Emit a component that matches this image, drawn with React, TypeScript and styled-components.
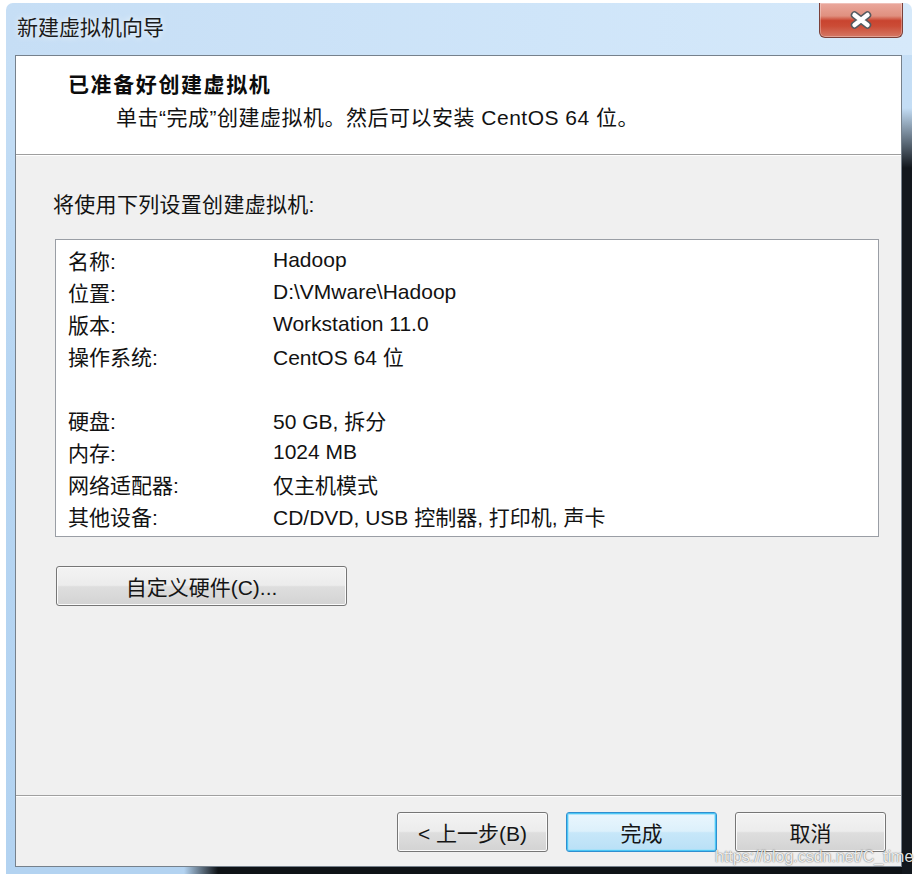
import React from "react";
import styled, { createGlobalStyle } from "styled-components";

const GlobalStyle = createGlobalStyle`
  html, body {
    margin: 0;
    padding: 0;
    background: #ffffff;
  }
  body {
    width: 920px;
    height: 876px;
    overflow: hidden;
    font-family: "Liberation Sans", "Noto Sans CJK SC", sans-serif;
    color: #121212;
  }
`;

const Stage = styled.div`
  position: relative;
  width: 920px;
  height: 876px;
  padding: 3px 8px 0 6px;
  box-sizing: border-box;
`;

const Window = styled.div`
  height: 871px;
  box-sizing: border-box;
  display: flex;
  flex-direction: column;
  padding: 0 10px 7px 9px;
  border-radius: 7px 7px 0 0;
  background:
    linear-gradient(to bottom, rgba(16, 20, 26, 0) 0, rgba(16, 20, 26, 0) 105px, #12171d 165px) right top / 10px 100% no-repeat,
    linear-gradient(to right, rgba(14, 18, 22, 0) 0, rgba(14, 18, 22, 0) 178px, #0e1216 212px) left bottom / 100% 7px no-repeat,
    linear-gradient(to right, #c6def5 0, #cfe5f9 60%, #d6e9fa 100%) top / 100% 52px no-repeat,
    linear-gradient(to bottom, #c8e0f6 0, #b6d5f2 45%, #b3d3f1 100%);
`;

const TitleBar = styled.div`
  height: 52px;
  display: flex;
  justify-content: space-between;
  align-items: flex-start;
  margin-right: -1px;
`;

const TitleText = styled.div`
  padding: 12px 0 0 2px;
  font-size: 21px;
  line-height: 26px;
  color: #1b1b1b;
  text-shadow: 0 0 6px rgba(255, 255, 255, 0.9);
`;

const CloseButton = styled.button`
  width: 84px;
  height: 35px;
  padding: 0;
  display: flex;
  align-items: center;
  justify-content: center;
  border: 1px solid #7b4039;
  border-top: none;
  border-radius: 0 0 6px 6px;
  background: linear-gradient(
    to bottom,
    #eaa89d 0%,
    #e0907f 38%,
    #c9442f 52%,
    #cb4c36 68%,
    #d57865 100%
  );
  box-shadow: inset 0 0 0 1px rgba(255, 255, 255, 0.3);
`;

const Client = styled.div`
  flex: 1;
  display: flex;
  flex-direction: column;
  border: 1px solid #76818c;
  background: #f0f0f0;
`;

const Header = styled.div`
  height: 99px;
  box-sizing: border-box;
  padding: 16px 0 0 52px;
  background: #ffffff;
  border-bottom: 1px solid #9e9e9e;
`;

const HeaderTitle = styled.div`
  font-size: 21px;
  line-height: 26px;
  font-weight: 700;
  letter-spacing: 1.6px;
  color: #0c0c0c;
`;

const HeaderSub = styled.div`
  margin: 7px 0 0 48px;
  font-size: 21px;
  line-height: 26px;
  letter-spacing: 0.5px;
`;

const Body = styled.div`
  flex: 1;
  display: flex;
  flex-direction: column;
  align-items: flex-start;
  padding: 36px 22px 0 37px;
  border-top: 1px solid #ffffff;
`;

const Caption = styled.div`
  font-size: 21px;
  line-height: 26px;
  letter-spacing: 0.3px;
`;

const SummaryList = styled.div`
  align-self: stretch;
  margin: 21px 0 0 2px;
  padding: 4px 0;
  background: #ffffff;
  border: 1px solid #9a9ea5;
`;

const Row = styled.div`
  display: grid;
  grid-template-columns: 205px 1fr;
  height: 32px;
  align-items: center;
  padding-left: 12px;
  font-size: 21px;
`;

const Button = styled.button<{ $primary?: boolean; $width: number }>`
  width: ${(p) => p.$width}px;
  height: 40px;
  padding: 0;
  border-radius: 3px;
  font-family: "Liberation Sans", "Noto Sans CJK SC", sans-serif;
  font-size: 21px;
  color: #151515;
  border: 1px solid ${(p) => (p.$primary ? "#2f8fd0" : "#767676")};
  box-shadow: ${(p) =>
    p.$primary
      ? "inset 0 0 0 1px #4cc6f4, inset 0 0 0 2px rgba(160,225,250,0.8)"
      : "inset 0 0 0 1px #fbfbfb"};
  background: ${(p) =>
    p.$primary
      ? "linear-gradient(to bottom, #eaf6fd 0%, #dcf0fb 48%, #c7e7f9 52%, #b9e0f6 100%)"
      : "linear-gradient(to bottom, #f3f3f3 0%, #ececec 48%, #dedede 52%, #d3d3d3 100%)"};
`;

const CustomizeButton = styled(Button)`
  margin: 29px 0 0 3px;
`;

const Footer = styled.div`
  display: flex;
  justify-content: flex-end;
  gap: 18px;
  padding: 16px 15px 14px;
  border-top: 1px solid #a0a0a0;
  box-shadow: inset 0 1px 0 #ffffff;
`;

const Watermark = styled.div`
  position: absolute;
  left: 715px;
  top: 848px;
  font-family: "Liberation Sans", sans-serif;
  font-size: 16px;
  line-height: 18px;
  color: rgba(255, 255, 255, 0.9);
  text-shadow: 0 0 1px rgba(0, 0, 0, 0.55), 0 0 2px rgba(0, 0, 0, 0.3);
  white-space: nowrap;
`;

const CloseGlyph: React.FC = () => (
  <svg width="26" height="18" viewBox="0 0 26 18">
    <path
      d="M6.5 4 L19.5 14 M19.5 4 L6.5 14"
      stroke="#555a60"
      strokeWidth="7.5"
      strokeLinecap="round"
      fill="none"
    />
    <path
      d="M6.5 4 L19.5 14 M19.5 4 L6.5 14"
      stroke="#ffffff"
      strokeWidth="4.5"
      strokeLinecap="round"
      fill="none"
    />
  </svg>
);

const settings: [string, string][] = [
  ["名称:", "Hadoop"],
  ["位置:", "D:\\VMware\\Hadoop"],
  ["版本:", "Workstation 11.0"],
  ["操作系统:", "CentOS 64 位"],
  ["", ""],
  ["硬盘:", "50 GB, 拆分"],
  ["内存:", "1024 MB"],
  ["网络适配器:", "仅主机模式"],
  ["其他设备:", "CD/DVD, USB 控制器, 打印机, 声卡"],
];

const App: React.FC = () => {
  return (
    <Stage>
      <GlobalStyle />
      <Window>
        <TitleBar>
          <TitleText>新建虚拟机向导</TitleText>
          <CloseButton aria-label="关闭">
            <CloseGlyph />
          </CloseButton>
        </TitleBar>

        <Client>
          <Header>
            <HeaderTitle>已准备好创建虚拟机</HeaderTitle>
            <HeaderSub>单击“完成”创建虚拟机。然后可以安装 CentOS 64 位。</HeaderSub>
          </Header>

          <Body>
            <Caption>将使用下列设置创建虚拟机:</Caption>
            <SummaryList>
              {settings.map(([label, value], i) => (
                <Row key={i}>
                  <span>{label}</span>
                  <span>{value}</span>
                </Row>
              ))}
            </SummaryList>
            <CustomizeButton $width={291}>自定义硬件(C)...</CustomizeButton>
          </Body>

          <Footer>
            <Button $width={151}>&lt; 上一步(B)</Button>
            <Button $width={151} $primary>
              完成
            </Button>
            <Button $width={151}>取消</Button>
          </Footer>
        </Client>
      </Window>
      <Watermark>https://blog.csdn.net/C_time</Watermark>
    </Stage>
  );
};

export default App;
